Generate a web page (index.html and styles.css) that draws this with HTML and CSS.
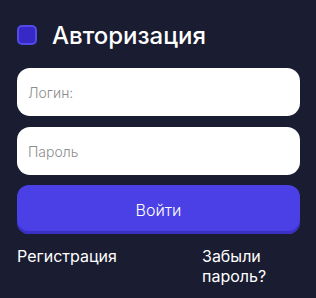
FILE: index.html
```html
<!DOCTYPE html>
<html lang="ru">

<head>
    <meta charset="UTF-8">
    <meta name="viewport" content="width=device-width, initial-scale=1.0">
    <title>Авторизация</title>
    <link rel="stylesheet" href="styles.css">
</head>

<body>
    <form class="auth">
        <div class="auth-head">
            <span class="auth-mark"></span>
            <h1 class="auth-title">Авторизация</h1>
        </div>
        <input class="auth-input" type="text" placeholder="Логин:">
        <input class="auth-input" type="password" placeholder="Пароль">
        <button class="auth-btn" type="button">Войти</button>
        <div class="auth-links">
            <a href="#">Регистрация</a>
            <a href="#" class="forgot">Забыли пароль?</a>
        </div>
    </form>
</body>

</html>
```

FILE: styles.css
```css
body {
    margin: 0;
    background-color: #1a1c31;
    font-family: "Inter", "Noto Sans", sans-serif;
}

.auth {
    display: flex;
    flex-direction: column;
    padding: 25px 16px 0 17px;
}

.auth-head {
    display: flex;
    align-items: center;
    height: 20px;
    margin-bottom: 23px;
}

.auth-mark {
    box-sizing: border-box;
    width: 20px;
    height: 20px;
    border: 2px solid #5449ea;
    border-radius: 5px;
    background-color: #3629c6;
}

.auth-title {
    margin: 0 0 0 15px;
    font-size: 24px;
    font-weight: 500;
    color: #fff;
}

.auth-input {
    box-sizing: border-box;
    height: 48px;
    margin-bottom: 11px;
    padding: 0 11px;
    border: none;
    border-radius: 13px;
    background-color: #fff;
    font-family: inherit;
    font-size: 14px;
    font-weight: 300;
    outline: none;
}

.auth-input::placeholder {
    color: #8c8c8c;
}

.auth-btn {
    height: 49px;
    margin-top: -1px;
    border: none;
    border-radius: 12px;
    background-color: #4a40e6;
    box-shadow: inset 0 -3px 0 #3a30c4;
    color: #fff;
    font-family: inherit;
    font-size: 16px;
    font-weight: 300;
}

.auth-links {
    display: grid;
    grid-template-columns: 185px 80px;
    margin-top: 12px;
    font-size: 16px;
    line-height: 20px;
}

.auth-links a {
    color: #fff;
    text-decoration: none;
}
```
